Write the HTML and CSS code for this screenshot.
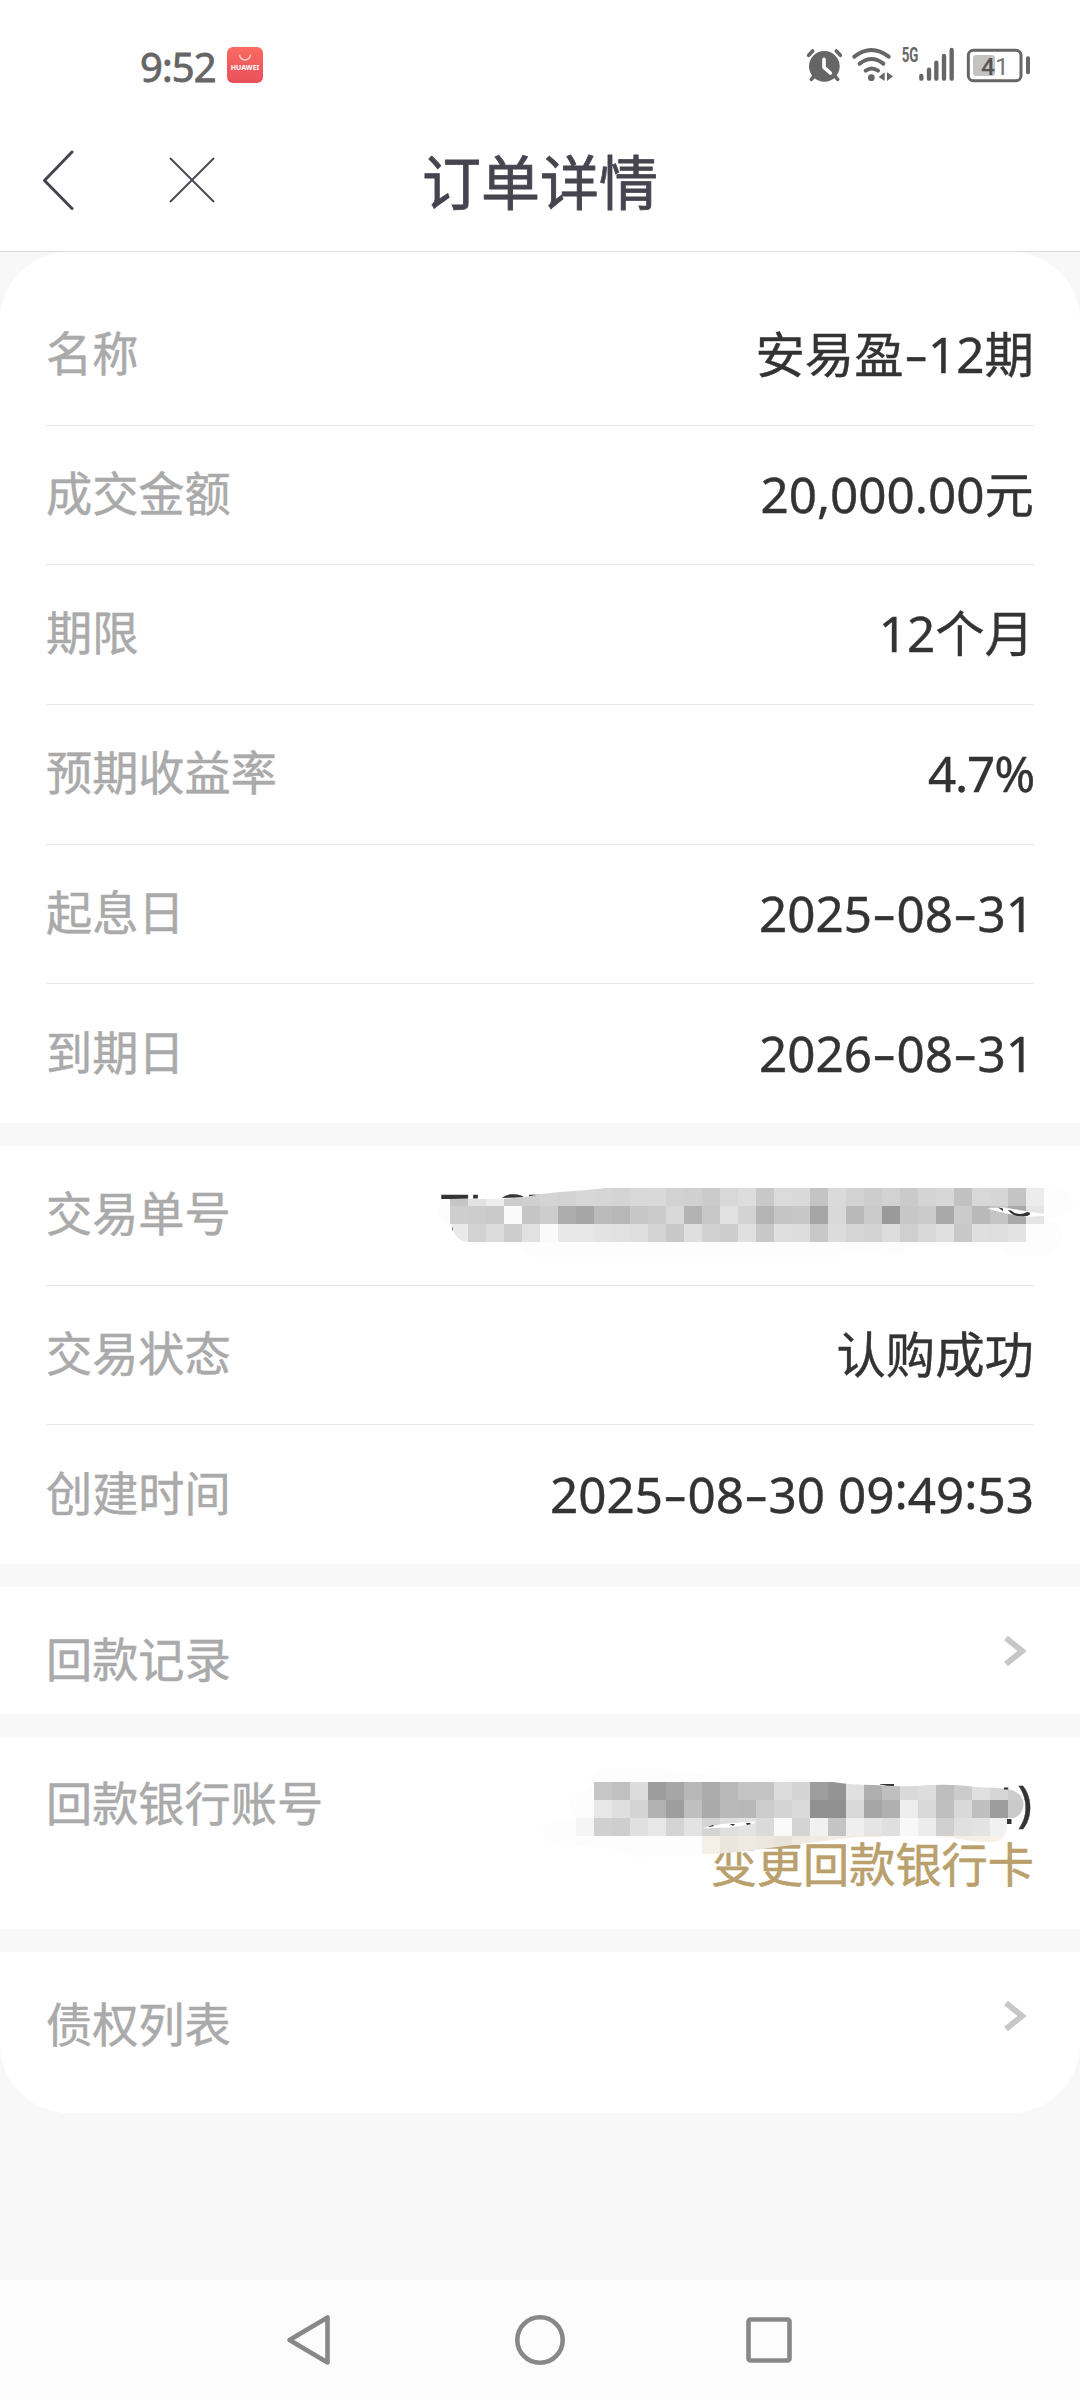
FILE: index.html
```html
<!DOCTYPE html>
<html lang="zh-CN">

<head>
    <meta charset="UTF-8">
    <meta name="viewport" content="width=device-width, initial-scale=1.0">
    <title>订单详情</title>
    <link rel="stylesheet" href="styles.css">
</head>

<body>
    <div class="status-bar">
        <span class="time">9:52</span>
        <div class="app-icon">
            <svg width="36" height="36" viewBox="0 0 36 36">
                <path d="M12.500 7.500a5.500 5.500 0 0 0 11 0" fill="none" stroke="#ffc9c4" stroke-width="1.500" />
            </svg>
            <span>HUAWEI</span>
        </div>
        <svg class="status-icons" width="260" height="70" viewBox="0 0 780 210">
            <!-- 闹钟 -->
            <g fill="none" stroke="#666" stroke-width="11" stroke-linecap="round">
                <path d="M56 76l12-13M151 76l-12-13M64 148l12-14M143 148l-12-14" />
            </g>
            <circle cx="103" cy="109" r="46" fill="#666" />
            <path d="M102 88v24l19 17" fill="none" stroke="#fff" stroke-width="11" stroke-linecap="round" stroke-linejoin="round" />
            <!-- wifi -->
            <g fill="none" stroke="#666" stroke-width="12" stroke-linecap="round">
                <path d="M193 80q51-40 103 0M209 101q36-28 71 0M227 122q18-13 37 0" />
            </g>
            <circle cx="244" cy="143" r="10" fill="#666" />
            <path d="M266 141l18-14v26zM291 127l18 12-18 14z" fill="#666" />
            <!-- 信号 -->
            <g fill="none" stroke="#666" stroke-width="13" stroke-linecap="round">
                <path d="M394 138v8M417 119v27M439 98v48M462 78v68M485 60v86" />
            </g>
            <text x="335" y="96" class="net" textLength="50" lengthAdjust="spacingAndGlyphs">5G</text>
            <!-- 电池 -->
            <rect x="549" y="75" width="66" height="63" rx="9" fill="#c3c3c3" />
            <rect x="535" y="61" width="158" height="91" rx="15" fill="none" stroke="#666" stroke-width="9" />
            <path d="M714 85v42" stroke="#666" stroke-width="12" stroke-linecap="round" />
            <text x="573" y="134" class="level">4<tspan class="light">1</tspan></text>
        </svg>
    </div>

    <div class="nav-bar">
        <svg class="back" width="32" height="60" viewBox="0 0 32 60">
            <path d="M30 2L2.500 30.500L30 58.500" />
        </svg>
        <svg class="close" width="48" height="48" viewBox="0 0 48 48">
            <path d="M2 2l44 44M46 2L2 46" />
        </svg>
        <h1>订单详情</h1>
    </div>

    <div class="content">
        <div class="card first">
            <div class="row"><span class="label">名称</span><span class="value">安易盈<i>-</i>12期</span></div>
            <div class="row"><span class="label">成交金额</span><span class="value">20,000.00元</span></div>
            <div class="row"><span class="label">期限</span><span class="value">12个月</span></div>
            <div class="row"><span class="label">预期收益率</span><span class="value rate">4.7%</span></div>
            <div class="row"><span class="label">起息日</span><span class="value">2025<i>-</i>08<i>-</i>31</span></div>
            <div class="row"><span class="label">到期日</span><span class="value">2026<i>-</i>08<i>-</i>31</span></div>
        </div>

        <div class="card second">
            <div class="row">
                <span class="label">交易单号</span>
                <span class="value serial">TLCB</span>
                <svg class="mask mask-serial" width="660" height="100" viewBox="420 1170 660 100">
                    <defs>
                        <clipPath id="serialClip">
                            <path d="M450 1199H503L525 1197Q545 1193 560 1192Q590 1190 605 1188H1044V1224V1242H468Q453 1240 452 1224H450z" />
                        </clipPath>
                    </defs>
                    <path d="M450 1199Q437 1201 437 1213Q439 1224 451 1225L475 1244H519Q524 1256 540 1258H838L840 1251L903 1255L906 1246H998L1006 1257H1048Q1065 1247 1060 1226L1050 1219L1072 1212Q1078 1189 1052 1186L1026 1186z" fill="#fdfdfd" />
                    <g class="cells" data-x="450" data-y="1188" clip-path="url(#serialClip)"></g>
                    <path d="M987 1208.500L1004 1207.500L1044 1214V1216L1022 1217Q1011 1215 987 1208.500z" fill="#fff" />
                    <path d="M998 1207.500l5 1v2.500zM1008 1210q4 0 5 2 7 4 14 0 3 0 3.500 2-3 3-9 2.500-9 0-13.500-6.500z" fill="#333" />
                </svg>
            </div>
            <div class="row"><span class="label">交易状态</span><span class="value">认购成功</span></div>
            <div class="row"><span class="label">创建时间</span><span class="value">2025<i>-</i>08<i>-</i>30 09<b>:</b>49<b>:</b>53</span></div>
        </div>

        <div class="card link">
            <span class="label">回款记录</span>
            <svg class="arrow" width="24" height="36" viewBox="0 0 24 36"><path d="M3 5l16 13L3 31" /></svg>
        </div>

        <div class="card bank">
            <span class="label">回款银行账号</span>
            <div class="bank-info">
                <span class="value">)</span>
                <a class="change">变更回款银行卡</a>
            </div>
            <svg class="mask mask-bank" width="540" height="110" viewBox="540 1760 540 110">
                <defs>
                    <clipPath id="bankClip">
                        <path d="M576 1782H833Q850 1785 875 1785Q895 1787 915 1786Q950 1783 975 1787L998 1788Q1024 1789 1023.500 1805Q1022 1818 1009 1819H1007Q1008 1841 993 1842Q968 1842 950 1837H858L800 1844L740 1852L702 1855V1836H576z" />
                    </clipPath>
                </defs>
                <path d="M594 1770Q640 1764 700 1774L833 1780V1836L702 1855L632 1858Q620 1845 560 1846Q541 1842 542 1828Q548 1822 576 1818Q560 1800 588 1788z" fill="#fdfdfd" />
                <g class="cells" data-x="576" data-y="1782" clip-path="url(#bankClip)"></g>
                <path d="M702 1828L722 1824L754 1821.500L756 1823L740 1826Q720 1829 702 1828z" fill="#fff" />
                <path d="M708 1827l5-2 1 1-4 1zM730 1824h5l-2 2zM746 1823h4l1 1-4 1zM880 1784h14v2q-7 0-14-1.500zM1004 1787.500h4.500l-.500 2h-4zM1007 1819h4.500v5h-4.500z" fill="#333" />
            </svg>
        </div>

        <div class="card link last">
            <span class="label">债权列表</span>
            <svg class="arrow" width="24" height="36" viewBox="0 0 24 36"><path d="M3 5l16 13L3 31" /></svg>
        </div>
    </div>

    <div class="system-nav">
        <svg width="50" height="54" viewBox="0 0 50 54"><path d="M41.500 4.500v45L3.500 27z" /></svg>
        <svg width="54" height="54" viewBox="0 0 54 54"><circle cx="27" cy="27" r="22.700" /></svg>
        <svg width="50" height="54" viewBox="0 0 50 54"><rect x="4.500" y="6.500" width="41" height="41" rx="2" /></svg>
    </div>
    <script src="main.js"></script>
</body>

</html>
```
FILE: styles.css
```css
* {
    box-sizing: border-box;
}

body {
    margin: 0;
    height: 2400px;
    display: flex;
    flex-direction: column;
    background-color: #f8f8f8;
    font-family: "Noto Sans", "Noto Sans CJK SC", sans-serif;
    color: #333;
}

/* 状态栏 */
.status-bar {
    height: 130px;
    padding: 30px 30px 0 140px;
    display: flex;
    align-items: flex-start;
    background-color: #fff;
}

.time {
    width: 87px;
    margin-top: 10px;
    font-size: 40px;
    line-height: 54px;
    letter-spacing: -0.9px;
    color: #666;
    -webkit-text-stroke: 0.8px #666;
}

.app-icon {
    position: relative;
    width: 36px;
    height: 36px;
    margin-top: 17px;
    border-radius: 6px;
    background: linear-gradient(#fa6a62, #e8505b);
}

.app-icon svg {
    display: block;
}

.app-icon span {
    position: absolute;
    left: 0;
    right: 0;
    top: 15px;
    text-align: center;
    font-size: 7px;
    font-weight: bold;
    line-height: 12px;
    color: #fff;
}

.status-icons {
    margin-left: auto;
}

.net {
    font: bold 60px Roboto, sans-serif;
    fill: #666;
}

.level {
    font: 500 74px Roboto, sans-serif;
    fill: #555;
}

.light {
    font-weight: 400;
    fill: #777;
}

/* 标题栏 */
.nav-bar {
    position: relative;
    height: 122px;
    padding: 0 42px 21px;
    display: flex;
    align-items: center;
    background-color: #fff;
    border-bottom: 1px solid #ddd;
}

.nav-bar svg {
    fill: none;
    stroke: #46444f;
}

.back {
    stroke-width: 3;
    stroke-linecap: round;
    stroke-linejoin: round;
}

.close {
    margin-left: 94px;
    stroke-width: 1.8;
}

h1 {
    position: absolute;
    left: 0;
    right: 0;
    top: 12px;
    margin: 0;
    text-align: center;
    font-size: 59px;
    font-weight: normal;
    line-height: 80px;
    color: #46444f;
    -webkit-text-stroke: 0.8px #46444f;
}

/* 内容 */
.content {
    display: flex;
    flex-direction: column;
    gap: 23px;
}

.card {
    position: relative;
    padding: 0 46px;
    background-color: #fff;
}

.first {
    height: 871px;
    padding-top: 34px;
    border-radius: 69px 69px 0 0;
}

.row {
    height: 139.7px;
    padding-bottom: 3px;
    display: flex;
    justify-content: space-between;
    align-items: center;
    border-bottom: 1px solid #e8e8e8;
}

.row:last-child {
    border-bottom: none;
}

.second {
    height: 418px;
}

.label {
    font-size: 46.2px;
    line-height: 60px;
    color: #aaa;
    -webkit-text-stroke: 0.5px #aaa;
}

.value {
    font-size: 49.4px;
    line-height: 60px;
    color: #333;
    -webkit-text-stroke: 0.4px #333;
}

.value i {
    display: inline-block;
    width: 24.5px;
    text-align: center;
    font-style: normal;
    transform: translateY(-1px) scaleX(1.5);
}

.value b {
    position: relative;
    top: -4px;
    font-weight: normal;
}

.rate {
    letter-spacing: -1.2px;
}

.serial {
    width: 593px;
    padding-bottom: 5px;
}

/* 马赛克遮挡 */
.mask {
    position: absolute;
    right: 0;
}

.mask-serial {
    top: 24px;
}

.mask-bank {
    top: 23px;
}

.link {
    height: 127px;
    display: flex;
    justify-content: space-between;
    align-items: center;
}

.link .label {
    padding-top: 19px;
}

.arrow {
    margin-right: 7px;
    fill: none;
    stroke: #c7c7c7;
    stroke-width: 6;
}

.bank {
    height: 192px;
    padding-top: 37px;
    display: flex;
    justify-content: space-between;
}

.bank-info {
    display: flex;
    flex-direction: column;
    align-items: flex-end;
}

.bank-info .value {
    margin: -2px 2px 2px 0;
}

.change {
    font-size: 46.2px;
    line-height: 62px;
    color: #b9a06c;
    -webkit-text-stroke: 0.6px #b9a06c;
}

.last {
    height: 161px;
    padding-bottom: 34px;
    border-radius: 0 0 69px 69px;
}

/* 系统导航 */
.system-nav {
    height: 120px;
    margin-top: auto;
    padding: 0 286px;
    display: flex;
    justify-content: space-between;
    align-items: center;
    background-color: #fcfcfc;
}

.system-nav svg {
    fill: none;
    stroke: #888;
    stroke-width: 4.6;
    stroke-linejoin: round;
}
```
FILE: main.js
```js
// 每行一串灰度值，两位十六进制一格，".." 为空
const size = 18
const mosaics = [
    [
        "c5e2eccdd0d4d2d7d6d4d8d9d2d0cbd8ddc8dbd9c4dad3cdd2cad4d7c1d8d6c4ec",
        "cecdcaf9c5cdada6bbb7c7cbd8b3c8e1d3b4c5c7a5d9b9cb9ac7cba9cbb9c5a9e5",
        "e9d2dbcde1fae8e7e3e1ded4c8dfd1cde0c8dfddc8dcd5d3ddcfd8e0c8dfdee3fd"
    ],
    [
        "..c6c0dc9da6b7abb9c4c4dcd49e94e0afbfd9ddbecbe0d6cc",
        "..e7dfd4b29ebfaab9b8ccd4da9090d8a5b0edd8bfd9bf9dc9",
        "f5d0cee0e7d4e3d4dfe3daf9d4f1c4efe5dff8eccfe0e3f1..",
        "..............f5ebefece8eff0f3f3f3......f8f4f5f7.."
    ]
]

document.querySelectorAll(".cells").forEach((g, n) => {
    mosaics[n].forEach((line, row) => {
        for (let i = 0; i < line.length / 2; i++) {
            const v = line.substr(i * 2, 2)
            if (v === "..") continue
            const rect = document.createElementNS("http://www.w3.org/2000/svg", "rect")
            const gray = parseInt(v, 16)
            rect.setAttribute("x", +g.dataset.x + i * size)
            rect.setAttribute("y", +g.dataset.y + row * size)
            rect.setAttribute("width", size)
            rect.setAttribute("height", size)
            rect.setAttribute("shape-rendering", "crispEdges")
            // 第四行压在金色文字上，偏暖
            rect.setAttribute("fill", row === 3 ? `rgb(${gray}, ${gray - 6}, ${gray - 14})` : `rgb(${gray}, ${gray}, ${gray})`)
            g.appendChild(rect)
        }
    })
})
```
